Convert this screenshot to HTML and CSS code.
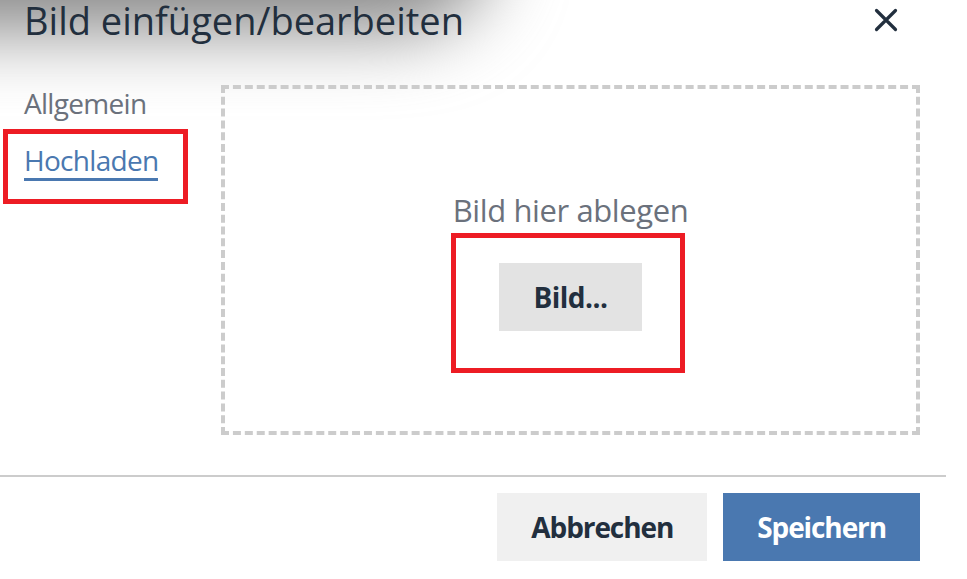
FILE: index.html
```html
<!DOCTYPE html>
<html lang="de">

<head>
  <meta charset="UTF-8" />
  <title>Bild einfügen/bearbeiten</title>
  <link rel="stylesheet" href="styles.css">
</head>

<body>
  <div class="dialog">
    <div class="dialog-header">
      <h1 class="dialog-title">Bild einfügen/bearbeiten</h1>
      <button class="dialog-close" aria-label="Schließen">
        <svg width="24" height="24" viewBox="0 0 24 24">
          <path d="M2.5 2.5L21.5 21.5M21.5 2.5L2.5 21.5" stroke="#222f3e" stroke-width="3.2" stroke-linecap="round" fill="none" />
        </svg>
      </button>
    </div>

    <div class="dialog-body">
      <nav class="tabs">
        <span class="tab">Allgemein</span>
        <span class="tab tab-active marked marked-tab">Hochladen</span>
      </nav>

      <div class="dropzone">
        <p class="dropzone-text">Bild hier ablegen</p>
        <button class="btn btn-browse marked marked-btn">Bild...</button>
      </div>
    </div>

    <div class="dialog-footer">
      <button class="btn btn-secondary">Abbrechen</button>
      <button class="btn btn-primary">Speichern</button>
    </div>
  </div>
</body>

</html>
```

FILE: styles.css
```css
/* --- BASE --- */
* {
  box-sizing: border-box;
}

body {
  margin: 0;
  background: #fff;
  font-family: "Open Sans", "Noto Sans", sans-serif;
  color: #222f3e;
}

.dialog {
  position: relative;
  width: 946px;
}

/* sombra cinza no canto superior esquerdo */
.dialog::before {
  content: "";
  position: absolute;
  left: -220px;
  top: -220px;
  width: 710px;
  height: 250px;
  background: #858585;
  border-bottom-right-radius: 90px;
  filter: blur(38px);
  z-index: -1;
}

/* --- HEADER --- */
.dialog-header {
  display: flex;
  align-items: center;
  justify-content: space-between;
  height: 40px;
  padding: 0 48px 0 24px;
}

.dialog-title {
  margin: 0;
  font-size: 38px;
  line-height: 40px;
  font-weight: 400;
  color: #222f3e;
}

.dialog-close {
  display: flex;
  padding: 0;
  border: none;
  background: none;
  cursor: pointer;
}

/* --- BODY --- */
.dialog-body {
  display: flex;
  padding: 45px 26px 40px 24px;
}

.tabs {
  display: flex;
  flex-direction: column;
  align-items: flex-start;
  gap: 18px;
  width: 197px;
  flex-shrink: 0;
}

.tab {
  font-size: 28px;
  line-height: 36px;
  letter-spacing: -0.7px;
  color: #6b717c;
  border-bottom: 3px solid transparent;
}

.tab-active {
  color: #4a78b0;
  border-bottom-color: #4a78b0;
}

.dropzone {
  flex: 1;
  height: 350px;
  border: 4px dashed #ccc;
  display: flex;
  flex-direction: column;
  align-items: center;
  justify-content: center;
}

.dropzone-text {
  margin: 0 0 33px;
  font-size: 31px;
  line-height: 40px;
  letter-spacing: -0.4px;
  color: #6b717c;
}

/* --- BOTÕES --- */
.btn {
  height: 68px;
  padding: 0 34px;
  border: none;
  font-family: inherit;
  font-size: 28px;
  font-weight: 700;
  letter-spacing: -1.1px;
  color: #222f3e;
  background: #f0f0f0;
  cursor: pointer;
}

.btn-browse {
  background: #e3e3e3;
  letter-spacing: -0.5px;
}

.btn-primary {
  background: #4a78b0;
  color: #fff;
}

/* --- MARCAÇÕES VERMELHAS --- */
.marked {
  position: relative;
}

.marked::after {
  content: "";
  position: absolute;
  border: 5px solid #ed1c24;
  pointer-events: none;
}

.marked-tab::after {
  top: -13px;
  left: -21px;
  right: -30px;
  bottom: -26px;
}

.marked-btn::after {
  top: -30px;
  left: -48px;
  right: -43px;
  bottom: -42px;
}

/* --- FOOTER --- */
.dialog-footer {
  display: flex;
  justify-content: flex-end;
  gap: 16px;
  padding: 16px 26px;
  border-top: 2px solid #ccc;
}
```
